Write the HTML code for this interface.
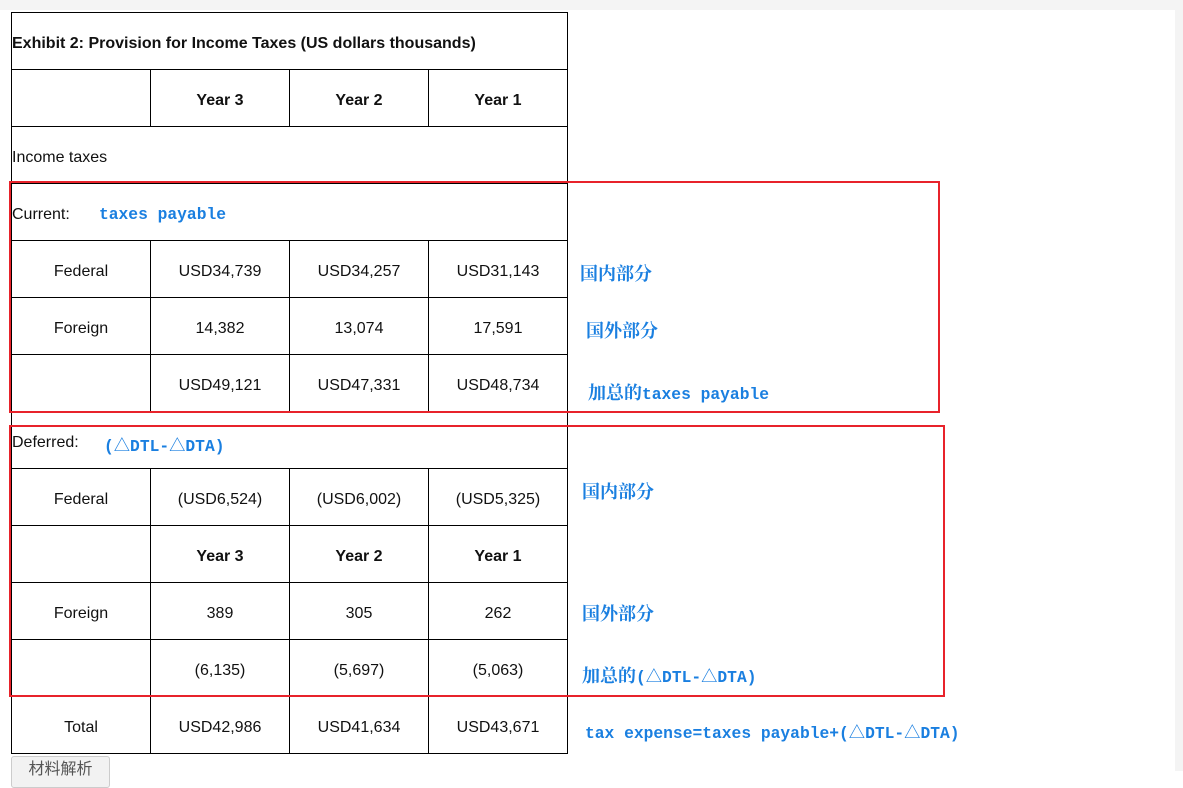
<!DOCTYPE html>
<html><head><meta charset="utf-8"><style>
body{margin:0;width:1183px;height:771px;overflow:hidden;background:#fff;position:relative;font-family:"Liberation Sans","Noto Sans CJK SC",sans-serif;}
.topbar{position:absolute;left:0;top:0;width:1183px;height:10px;background:#f4f4f4;}
.rside{position:absolute;left:1175px;top:0;width:8px;height:771px;background:#f4f4f4;}
table{position:absolute;left:11px;top:12px;border-collapse:collapse;font-size:16px;color:#111;}
td{border:1px solid #000;height:56px;width:138px;text-align:center;padding:5px 0 0 0;box-sizing:border-box;}
td.l{text-align:left;}
tr{height:57px;}
b{font-weight:bold;}
.red{position:absolute;border:2px solid #e8232b;box-sizing:border-box;}
.a{position:absolute;color:#1a7fe0;font-family:"Liberation Mono","Noto Serif CJK SC",monospace;font-size:16.3px;font-weight:bold;white-space:nowrap;}
.a span{font-size:18px;font-family:"Noto Serif CJK SC",serif;}
.btn{position:absolute;left:11px;top:756px;width:97px;height:30px;border:1px solid #ccc;border-radius:3px;background:#f2f2f2;color:#555;font-size:16px;text-align:center;line-height:26px;}
</style></head><body>
<div class="topbar"></div><div class="rside"></div>
<table>
<tr><td class="l" colspan="4" style="width:556px"><b>Exhibit 2: Provision for Income Taxes (US dollars thousands)</b></td></tr>
<tr><td></td><td><b>Year 3</b></td><td><b>Year 2</b></td><td><b>Year 1</b></td></tr>
<tr><td class="l" colspan="4">Income taxes</td></tr>
<tr><td class="l" colspan="4">Current:</td></tr>
<tr><td>Federal</td><td>USD34,739</td><td>USD34,257</td><td>USD31,143</td></tr>
<tr><td>Foreign</td><td>14,382</td><td>13,074</td><td>17,591</td></tr>
<tr><td></td><td>USD49,121</td><td>USD47,331</td><td>USD48,734</td></tr>
<tr><td class="l" colspan="4">Deferred:</td></tr>
<tr><td>Federal</td><td>(USD6,524)</td><td>(USD6,002)</td><td>(USD5,325)</td></tr>
<tr><td></td><td><b>Year 3</b></td><td><b>Year 2</b></td><td><b>Year 1</b></td></tr>
<tr><td>Foreign</td><td>389</td><td>305</td><td>262</td></tr>
<tr><td></td><td>(6,135)</td><td>(5,697)</td><td>(5,063)</td></tr>
<tr><td>Total</td><td>USD42,986</td><td>USD41,634</td><td>USD43,671</td></tr>
</table>
<div class="red" style="left:9px;top:181px;width:931px;height:232px"></div>
<div class="red" style="left:9px;top:425px;width:936px;height:272px"></div>
<div class="a" style="left:99px;top:205px">taxes payable</div>
<div class="a" style="left:580px;top:260px"><span>国内部分</span></div>
<div class="a" style="left:586px;top:317px"><span>国外部分</span></div>
<div class="a" style="left:588px;top:379px"><span>加总的</span>taxes payable</div>
<div class="a" style="left:104px;top:432px">(△DTL-△DTA)</div>
<div class="a" style="left:582px;top:478px"><span>国内部分</span></div>
<div class="a" style="left:582px;top:600px"><span>国外部分</span></div>
<div class="a" style="left:582px;top:662px"><span>加总的</span>(△DTL-△DTA)</div>
<div class="a" style="left:585px;top:719px">tax expense=taxes payable+(△DTL-△DTA)</div>
<div class="btn">材料解析</div>
</body></html>
